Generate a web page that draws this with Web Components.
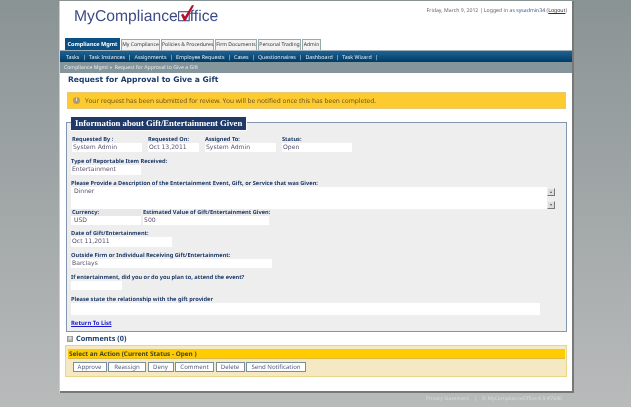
<!DOCTYPE html>
<html lang="en">
<head>
<meta charset="utf-8">
<title>Request for Approval to Give a Gift</title>
<style>
    html, body { margin: 0; height: 407px; overflow: hidden; }
    body {
        background: linear-gradient(180deg, #8a9394 0%, #b9bbbb 100%);
        font-family: "Noto Sans", sans-serif;
        font-size: 6.5px;
        text-rendering: geometricPrecision;
    }
    mco-page, mco-footer { filter: blur(.3px); }
</style>
</head>
<body>

<template id="mco-header">
    <style>
        :host { display: flex; justify-content: space-between; height: 37px; padding: 0 5px 0 14px; }
        .logo { display: flex; align-items: flex-start; padding-top: 7px; font: 15.7px/17px "Liberation Sans", sans-serif; color: #3e4c86; }
        svg { width: 12px; height: 20px; margin-top: -5px; flex: none; overflow: visible; }
        .info { font: 5.2px "Noto Sans", sans-serif; color: #666; padding-top: 5px; }
        .info b { font-weight: normal; color: #3d5a8a; }
        .info u { color: #333; }
    </style>
    <div class="logo">MyCompliance<svg viewBox="0 0 12 20"><rect x=".6" y="8.7" width="10.6" height="9" fill="#fff" stroke="#3e4c86" stroke-width="1.1"/><path d="M3 12 5 10.5 7 13.5 14 2 16 2.5 7.5 18 6 18z" fill="#b0122f"/></svg>ffice</div>
    <div class="info">Friday, March 9, 2012 | Logged in as <b>sysadmin34</b> (<u>Logout</u>)</div>
</template>

<template id="mco-tabs">
    <style>
        :host { display: flex; height: 12px; padding-left: 5px; align-items: flex-end; gap: 1px; }
        ::slotted(span) {
            font: 5.1px/10px "Noto Sans", sans-serif;
            color: #333;
            background: #f2f2f2;
            border: 1px solid #9aa;
            border-bottom: 0;
            height: 10px;
            box-sizing: content-box;
            text-align: center;
            white-space: nowrap;
        }
        ::slotted(.on) {
            font-weight: bold;
            font-size: 5.5px;
            color: #fff;
            background: #0d4f80;
            border-color: #0d4f80;
            height: 11px;
            line-height: 11px;
        }
    </style>
    <slot></slot>
</template>

<template id="mco-nav">
    <style>
        :host {
            display: flex; align-items: center; gap: 3.3px;
            height: 12px; padding-left: 6px;
            background: linear-gradient(#1f6394, #003b66);
            border-top: 1px solid #9fb0bb;
            box-sizing: border-box;
            color: #e4edf4;
            font: 5.3px "Noto Sans", sans-serif;
        }
        ::slotted(span) { white-space: nowrap; }
    </style>
    <slot></slot>
</template>

<template id="mco-crumb">
    <style>
        :host { display: block; height: 11px; background: #84959c; color: #e6ecee; font: 5.15px/11px "Noto Sans", sans-serif; padding-left: 4px; }
    </style>
    <slot></slot>
</template>

<template id="mco-title">
    <style>
        :host { display: block; height: 13px; padding-left: 8px; color: #1c3c6c; font: bold 7.6px/13px "DejaVu Sans", sans-serif; }
    </style>
    <slot></slot>
</template>

<template id="mco-alert">
    <style>
        :host {
            display: flex; align-items: center; gap: 5px;
            margin: 6px 6px 0 7px; height: 17px; box-sizing: border-box;
            padding-left: 5px;
            background: #fdcb30; border: 1px solid #e8c873;
            color: #6b5520; font: 6.55px "Noto Sans", sans-serif;
        }
        i { width: 7px; height: 7px; border-radius: 50%; background: #b29a6a; color: #fff; font: bold 5px/7px "Liberation Sans", sans-serif; text-align: center; flex: none; }
    </style>
    <i>i</i><slot></slot>
</template>

<template id="mco-panel">
    <style>
        :host {
            display: block; position: relative;
            margin: 13px 5px 0 6px; height: 210px; box-sizing: border-box;
            background: #eeeeee; border: 1px solid #8396b0;
            padding: 13px 0 0 4px;
        }
        .legend {
            position: absolute; left: 4px; top: -6px; height: 14px; box-sizing: border-box;
            background: #1f3a68; color: #fff; border: 1px solid #fff; border-width: 0 1px 1px 0;
            font: bold 8.7px/13px "Liberation Serif", serif; padding: 0 4px;
        }
    </style>
    <div class="legend"><slot name="legend"></slot></div>
    <slot></slot>
</template>

<template id="mco-field">
    <style>
        :host { display: block; color: #1f3a68; font: bold 5.65px/7px "Noto Sans", sans-serif; }
        .v { display: flex; background: #fff; color: #5a5070; font: normal 6.1px/9px "DejaVu Sans", sans-serif; height: var(--h, 9px); width: var(--w, 70px); padding-left: 1px; box-sizing: border-box; }
    </style>
    <div><slot name="label"></slot></div>
    <div class="v"><slot></slot></div>
</template>

<template id="mco-scroll">
    <style>
        :host { display: flex; flex-direction: column; justify-content: space-between; height: 21px; width: 8px; }
        i { display: block; height: 8px; background: #ddd; border: 1px solid; border-color: #eee #777 #777 #eee; box-sizing: border-box; color: #555; font: normal 4px/6px "DejaVu Sans", sans-serif; text-align: center; }
    </style>
    <i>▴</i><i>▾</i>
</template>

<template id="mco-actions">
    <style>
        :host { display: block; margin: 0 5px 0 5px; height: 32px; box-sizing: border-box; background: #f5e9c4; border: 1px solid #e9d488; padding: 3px 1px 0 2px; }
        .bar { height: 10px; box-sizing: border-box; background: #ffcc00; border-bottom: 1px solid #dcb942; color: #44461e; font: bold 6.4px/9px "Noto Sans", sans-serif; padding-left: 1px; }
        .btns { display: flex; gap: 1.5px; margin: 3px 0 0 4.5px; }
    </style>
    <div class="bar"><slot name="title"></slot></div>
    <div class="btns"><slot></slot></div>
</template>

<template id="mco-button">
    <style>
        :host { display: block; height: 10px; box-sizing: border-box; background: #fff; border: 1px solid #7a8f99; color: #5a6080; font: 6.1px/8px "Noto Sans", sans-serif; text-align: center; white-space: nowrap; }
    </style>
    <slot></slot>
</template>

<template id="mco-page">
    <style>
        :host { display: block; box-sizing: border-box; width: 514px; height: 392px; margin: 1px 0 0 60px; background: #fff; border-right: 2px solid #777; border-bottom: 2px solid #777; box-shadow: -1px 0 0 #ccc; }
    </style>
    <slot></slot>
</template>

<template id="mco-row">
    <style>
        :host { display: flex; align-items: flex-start; gap: var(--gap, 1px); margin: var(--m, 0); }
    </style>
    <slot></slot>
</template>

<template id="mco-footer">
    <style>
        :host { display: flex; justify-content: flex-end; gap: 5px; height: 12px; width: 562px; color: #d8dcdc; font: 5.1px/13px "Noto Sans", sans-serif; }
    </style>
    <slot></slot>
</template>

<template id="mco-comments">
    <style>
        :host { display: flex; align-items: center; gap: 3px; height: 13px; box-sizing: border-box; padding-top: 1px; margin-left: 7px; color: #1c3c6c; font: bold 7.3px "Noto Sans", sans-serif; }
        i { width: 4px; height: 4px; background: #b9b9b9; border: 1px solid #999; color: #fff; font: bold 6px/4px "Liberation Sans", sans-serif; text-align: center; font-style: normal; }
    </style>
    <i>+</i><slot></slot>
</template>

<mco-page>
    <mco-header></mco-header>
    <mco-tabs>
        <span class="on" style="width:53px">Compliance Mgmt</span><span style="width:37px">My Compliance</span><span style="width:51px">Policies &amp; Procedures</span><span style="width:40px">Firm Documents</span><span style="width:41px">Personal Trading</span><span style="width:17px">Admin</span>
    </mco-tabs>
    <mco-nav>
        <span>Tasks</span><span>|</span><span>Task Instances</span><span>|</span><span>Assignments</span><span>|</span><span>Employee Requests</span><span>|</span><span>Cases</span><span>|</span><span>Questionnaires</span><span>|</span><span>Dashboard</span><span>|</span><span>Task Wizard</span><span>|</span>
    </mco-nav>
    <mco-crumb>Compliance Mgmt »&nbsp; Request for Approval to Give a Gift</mco-crumb>
    <mco-title>Request for Approval to Give a Gift</mco-title>
    <mco-alert>Your request has been submitted for review. You will be notified once this has been completed.</mco-alert>
    <mco-panel>
        <span slot="legend">Information about Gift/Entertainment Given</span>
        <mco-row style="--gap:6px;--m:0 0 0 1px">
            <mco-field style="--w:70px"><span slot="label">Requested By :</span>System Admin</mco-field>
            <mco-field style="--w:51px"><span slot="label">Requested On:</span>Oct 13,2011</mco-field>
            <mco-field style="--w:71px"><span slot="label">Assigned To:</span>System Admin</mco-field>
            <mco-field style="--w:70px"><span slot="label">Status:</span>Open</mco-field>
        </mco-row>
        <mco-field style="--w:70px;--h:10px;margin-top:6px"><span slot="label">Type of Reportable Item Received:</span>Entertainment</mco-field>
        <mco-row style="--gap:0;--m:5px 0 0 0;align-items:flex-end">
            <mco-field style="--w:476px;--h:22px"><span slot="label">Please Provide a Description of the Entertainment Event, Gift, or Service that was Given:</span>&nbsp;Dinner</mco-field>
            <mco-scroll></mco-scroll>
        </mco-row>
        <mco-row style="--gap:2px">
            <mco-field style="--w:70px"><span slot="label" style="background:#e8e8e8;display:block;padding-left:1px">Currency:</span>&nbsp;USD</mco-field>
            <mco-field style="--w:126px"><span slot="label">Estimated Value of Gift/Entertainment Given:</span>500</mco-field>
        </mco-row>
        <mco-field style="--w:101px;--h:10px;margin-top:5px"><span slot="label">Date of Gift/Entertainment:</span>Oct 11,2011</mco-field>
        <mco-field style="--w:201px;margin-top:5px"><span slot="label">Outside Firm or Individual Receiving Gift/Entertainment:</span>Barclays</mco-field>
        <mco-field style="--w:51px;margin-top:6px"><span slot="label">If entertainment, did you or do you plan to, attend the event?</span></mco-field>
        <mco-field style="--w:469px;--h:12px;margin-top:6px"><span slot="label">Please state the relationship with the gift provider</span></mco-field>
        <div style="margin-top:4px;line-height:8px"><a href="#" style="color:#1a1ad0;font:bold 5.9px/8px 'Noto Sans',sans-serif">Return To List</a></div>
    </mco-panel>
    <mco-comments>Comments (0)</mco-comments>
    <mco-actions>
        <span slot="title">Select an Action (Current Status - Open )</span>
        <mco-button style="width:34px">Approve</mco-button><mco-button style="width:38px">Reassign</mco-button><mco-button style="width:26px">Deny</mco-button><mco-button style="width:39px">Comment</mco-button><mco-button style="width:29px">Delete</mco-button><mco-button style="width:60px">Send Notification</mco-button>
    </mco-actions>
</mco-page>
<mco-footer><span>Privacy Statement</span><span>|</span><span>© MyComplianceOffice 6.9-#7640</span></mco-footer>

<script>
    // every element here is just template + open shadow root
    ["mco-header", "mco-tabs", "mco-nav", "mco-crumb", "mco-title", "mco-alert", "mco-panel", "mco-field", "mco-scroll",
     "mco-actions", "mco-button", "mco-page", "mco-row", "mco-footer", "mco-comments"].forEach((id) => {
        let template = document.getElementById(id);
        customElements.define(id, class extends HTMLElement {
            constructor() {
                super();
                this.attachShadow({mode: "open"});
                this.shadowRoot.appendChild(template.content.cloneNode(true));
            }
        });
    });
</script>
</body>
</html>
